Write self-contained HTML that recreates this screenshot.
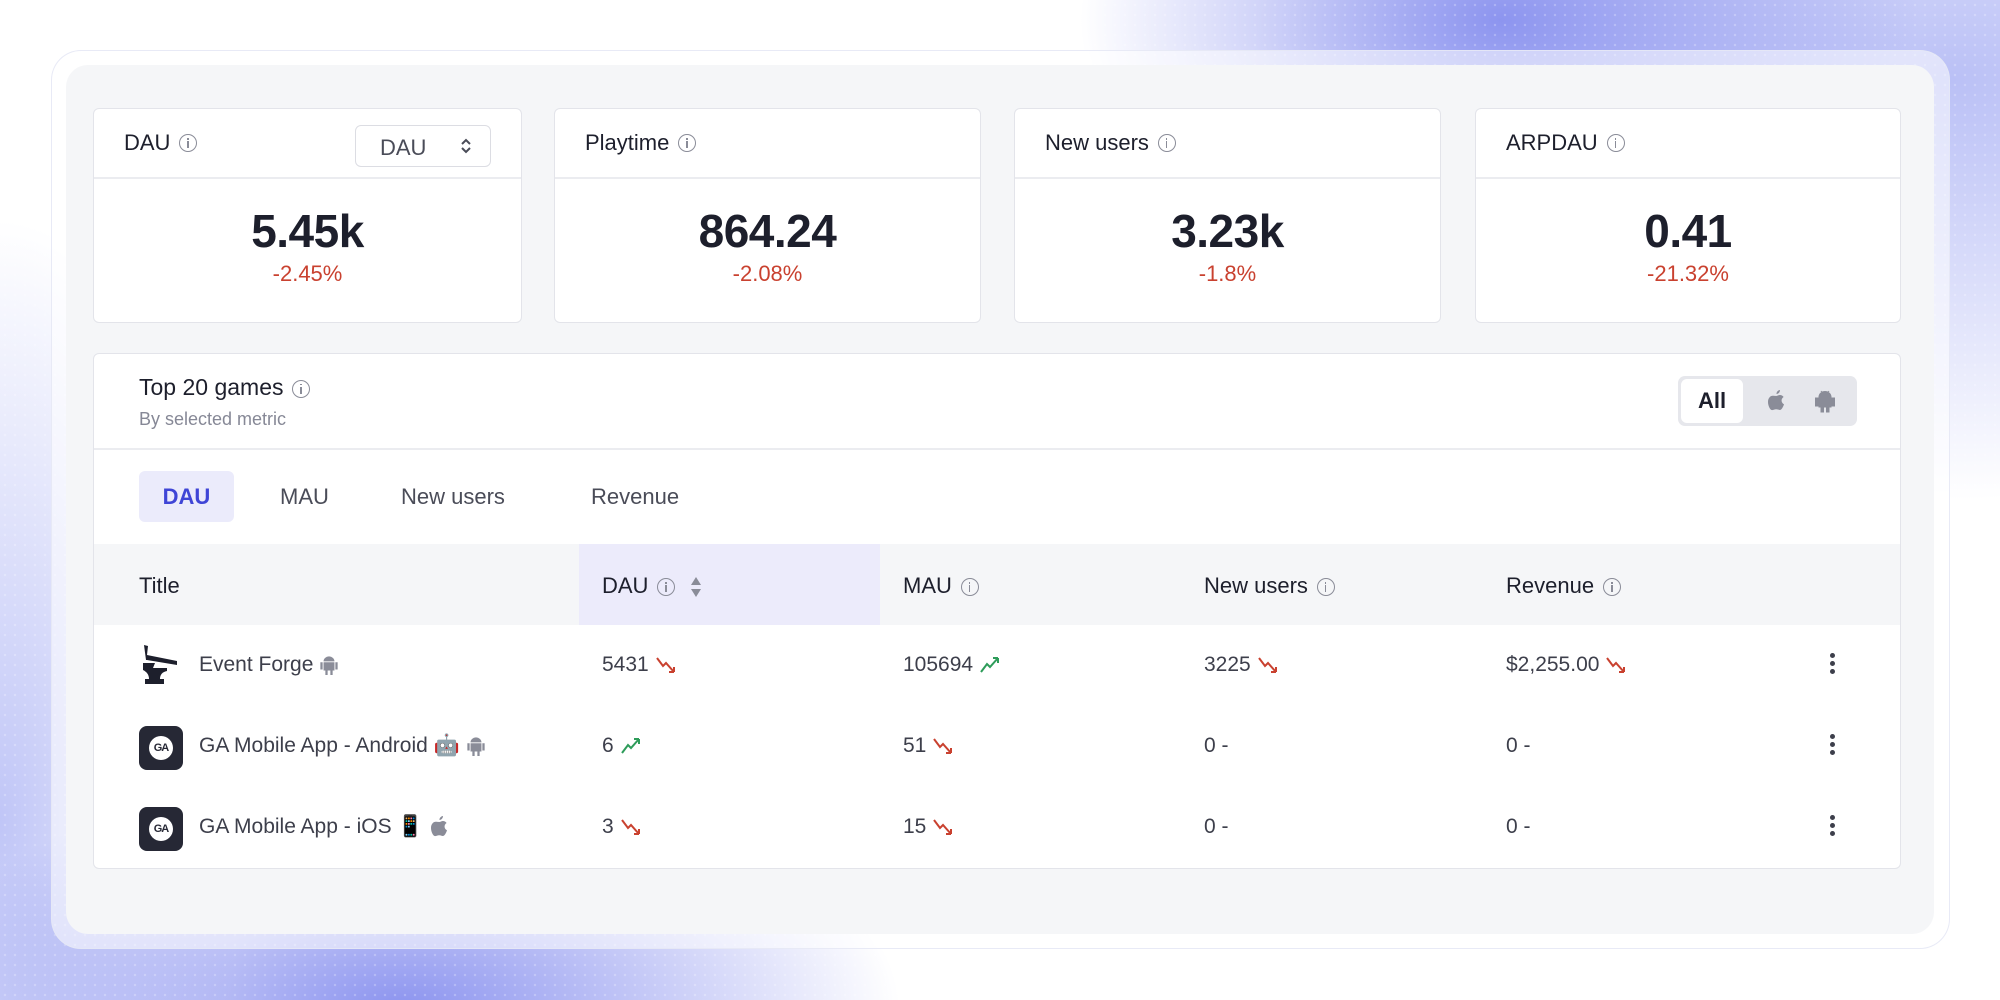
<!DOCTYPE html>
<html><head><meta charset="utf-8"><style>
*{box-sizing:border-box;margin:0;padding:0}
body{width:2000px;height:1000px;overflow:hidden;font-family:"Liberation Sans",sans-serif;color:#1d1f2c;position:relative;
background:
radial-gradient(ellipse 420px 240px at 1500px 20px,rgba(110,120,235,.75),rgba(110,120,235,0) 100%),
radial-gradient(ellipse 700px 420px at 1950px 80px,rgba(140,150,240,.6),rgba(140,150,240,0) 100%),
radial-gradient(ellipse 500px 240px at 400px 1010px,rgba(110,120,235,.8),rgba(110,120,235,0) 100%),
radial-gradient(ellipse 240px 600px at 0px 820px,rgba(140,150,240,.55),rgba(140,150,240,0) 100%),
#fff}
.dots{position:absolute;inset:0;background-image:radial-gradient(rgba(255,255,255,.25) 1px,transparent 1.4px);background-size:10px 10px}
.outer{position:absolute;left:51px;top:50px;width:1899px;height:899px;border-radius:30px;background:rgba(255,255,255,.55);border:1px solid rgba(230,232,245,.9)}
.panel{position:absolute;left:66px;top:65px;width:1868px;height:869px;border-radius:22px;background:#f5f6f8}
.card{position:absolute;top:108px;height:215px;background:#fff;border:1px solid #e3e4ea;border-radius:6px}
.card .hd{height:70px;border-bottom:2px solid #ebecf0;display:flex;align-items:center;padding-left:30px;font-size:22px}
.info{display:inline-block;width:18px;height:18px;border:1.5px solid #8a8c98;border-radius:50%;margin-left:9px;position:relative;vertical-align:middle}
.info:after{content:"";position:absolute;left:7px;top:6px;width:1.5px;height:7px;background:#8a8c98}
.info:before{content:"";position:absolute;left:7px;top:3px;width:1.5px;height:1.5px;background:#8a8c98}
.big{text-align:center;font-size:46px;font-weight:600;margin-top:25px;line-height:54px;letter-spacing:-.5px}
.pct{text-align:center;font-size:22px;color:#c9412f;margin-top:3px}
.sel{position:absolute;left:261px;top:16px;width:136px;height:42px;border:1px solid #dcdde3;border-radius:6px;font-size:22px;color:#4a4c58;padding:9px 0 0 24px}
.tbl{position:absolute;left:93px;top:353px;width:1808px;height:516px;background:#fff;border:1px solid #e3e4ea;border-radius:6px;overflow:hidden}
.abs{position:absolute}
.row{position:absolute;left:0;width:1808px;font-size:21px;color:#3d3f4b}
.dn,.up{display:inline-block;vertical-align:middle;margin-left:6px}
.kb{position:absolute;left:1736px;width:5px}
.kb i{display:block;width:5px;height:5px;border-radius:50%;background:#3d3f4b;margin-bottom:3px}
.ic{position:absolute;left:45px;width:44px;height:44px;border-radius:8px;background:#262835}
.ic b{position:absolute;left:10px;top:10px;width:24px;height:24px;border-radius:50%;background:#fff;color:#262835;font-size:11px;font-weight:700;text-align:center;line-height:24px;letter-spacing:-1px}
</style></head><body><div class="dots"></div>
<div class="outer"></div>
<div class="panel"></div>

<div class="card" style="left:93px;width:429px"><div class="hd">DAU<span class="info"></span></div>
<div class="sel">DAU<svg style="position:absolute;right:18px;top:11px" width="12" height="18" viewBox="0 0 12 18"><path d="M2 7l4-4 4 4M2 11l4 4 4-4" fill="none" stroke="#4a4c58" stroke-width="2"/></svg></div>
<div class="big">5.45k</div><div class="pct">-2.45%</div></div>
<div class="card" style="left:554px;width:427px"><div class="hd">Playtime<span class="info"></span></div><div class="big">864.24</div><div class="pct">-2.08%</div></div>
<div class="card" style="left:1014px;width:427px"><div class="hd">New users<span class="info"></span></div><div class="big">3.23k</div><div class="pct">-1.8%</div></div>
<div class="card" style="left:1475px;width:426px"><div class="hd">ARPDAU<span class="info"></span></div><div class="big">0.41</div><div class="pct">-21.32%</div></div>

<div class="tbl">
<div class="abs" style="left:45px;top:20px;font-size:23px">Top 20 games<span class="info"></span></div>
<div class="abs" style="left:45px;top:55px;font-size:18px;color:#868896">By selected metric</div>
<div class="abs" style="left:1584px;top:22px;width:179px;height:50px;border-radius:7px;background:#e6e7ec">
 <div class="abs" style="left:3px;top:3px;width:62px;height:44px;background:#fff;border-radius:6px;font-size:22px;font-weight:600;text-align:center;line-height:44px">All</div>
 <svg class="abs" style="left:88px;top:13px" width="20" height="24" viewBox="0 0 20 24"><path d="M14 1c0 2-1.5 4-3.5 4C10.3 3 12 1.2 14 1zM10 7c1.5 0 2.5-1 4-1 1.2 0 2.8.7 3.6 2-3 1.8-2.5 6 .4 7.2-.8 2.5-2.4 5.8-4.2 5.8-1.3 0-1.8-.8-3.6-.8s-2.4.8-3.6.8C4.5 22 2 17 2 13 2 9 4.5 6.8 6.6 6.8 8 6.8 9 7 10 7z" fill="#8a8c98"/></svg>
 <svg class="abs" style="left:136px;top:13px" width="22" height="24" viewBox="0 0 22 24"><path d="M5 8a6 5.5 0 0 1 12 0zM5 9h12v9H5zM1.5 9h2.5v8H1.5zM18 9h2.5v8H18zM7 18h2.5v5H7zM12.5 18H15v5h-2.5zM7 2l2 3M15 2l-2 3" fill="#8a8c98" stroke="#8a8c98" stroke-width="1"/></svg>
</div>
<div class="abs" style="left:0;top:94px;width:1808px;height:2px;background:#ebecf0"></div>
<div class="abs" style="left:45px;top:117px;width:95px;height:51px;border-radius:6px;background:#ebebfb;color:#3f45d6;font-size:22px;font-weight:600;text-align:center;line-height:51px">DAU</div>
<div class="abs" style="left:186px;top:130px;font-size:22px;color:#4a4c58">MAU</div>
<div class="abs" style="left:307px;top:130px;font-size:22px;color:#4a4c58">New users</div>
<div class="abs" style="left:497px;top:130px;font-size:22px;color:#4a4c58">Revenue</div>

<div class="abs" style="left:0;top:190px;width:1808px;height:81px;background:#f5f6f8"></div>
<div class="abs" style="left:485px;top:190px;width:301px;height:81px;background:#ecebfb"></div>
<div class="row" style="top:219px;color:#1d1f2c;font-size:22px">
 <span class="abs" style="left:45px">Title</span>
 <span class="abs" style="left:508px">DAU<span class="info"></span><svg style="margin-left:14px;vertical-align:middle" width="14" height="24" viewBox="0 0 14 24"><path d="M7 2l5 8H2zM7 22l5-8H2z" fill="#8a8c98"/></svg></span>
 <span class="abs" style="left:809px">MAU<span class="info"></span></span>
 <span class="abs" style="left:1110px">New users<span class="info"></span></span>
 <span class="abs" style="left:1412px">Revenue<span class="info"></span></span>
</div>

<svg class="abs" style="left:45px;top:289px" width="44" height="44" viewBox="0 0 44 44"><path d="M5 2l4 1-1 9 30 6v4L8 17l-1 0zM4 20h12l-2 5h14v3c-5 1-7 4-7 8h4v5H6v-5h4c0-4-2-7-6-9z" fill="#1d1f2c"/></svg>
<div class="row" style="top:299px">
 <span class="abs" style="left:105px">Event Forge <svg style="vertical-align:middle" width="20" height="22" viewBox="0 0 22 24"><path d="M5 8a6 5.5 0 0 1 12 0zM5 9h12v9H5zM1.5 9h2.5v8H1.5zM18 9h2.5v8H18zM7 18h2.5v5H7zM12.5 18H15v5h-2.5z" fill="#8a8c98"/></svg></span>
 <span class="abs" style="left:508px">5431<svg class="dn" width="22" height="18" viewBox="0 0 22 18"><path d="M2 2l6 8 3-3 8 9m0 0h-5m5 0v-5" fill="none" stroke="#c9412f" stroke-width="2"/></svg></span>
 <span class="abs" style="left:809px">105694<svg class="up" width="22" height="18" viewBox="0 0 22 18"><path d="M2 16l6-8 3 3 8-9m0 0h-5m5 0v5" fill="none" stroke="#2e9c5a" stroke-width="2"/></svg></span>
 <span class="abs" style="left:1110px">3225<svg class="dn" width="22" height="18" viewBox="0 0 22 18"><path d="M2 2l6 8 3-3 8 9m0 0h-5m5 0v-5" fill="none" stroke="#c9412f" stroke-width="2"/></svg></span>
 <span class="abs" style="left:1412px">$2,255.00<svg class="dn" width="22" height="18" viewBox="0 0 22 18"><path d="M2 2l6 8 3-3 8 9m0 0h-5m5 0v-5" fill="none" stroke="#c9412f" stroke-width="2"/></svg></span>
 <span class="kb" style="top:0"><i></i><i></i><i></i></span>
</div>

<div class="ic" style="top:372px"><b>GA</b></div>
<div class="row" style="top:380px">
 <span class="abs" style="left:105px">GA Mobile App - Android 🤖 <svg style="vertical-align:middle" width="20" height="22" viewBox="0 0 22 24"><path d="M5 8a6 5.5 0 0 1 12 0zM5 9h12v9H5zM1.5 9h2.5v8H1.5zM18 9h2.5v8H18zM7 18h2.5v5H7zM12.5 18H15v5h-2.5z" fill="#8a8c98"/></svg></span>
 <span class="abs" style="left:508px">6<svg class="up" width="22" height="18" viewBox="0 0 22 18"><path d="M2 16l6-8 3 3 8-9m0 0h-5m5 0v5" fill="none" stroke="#2e9c5a" stroke-width="2"/></svg></span>
 <span class="abs" style="left:809px">51<svg class="dn" width="22" height="18" viewBox="0 0 22 18"><path d="M2 2l6 8 3-3 8 9m0 0h-5m5 0v-5" fill="none" stroke="#c9412f" stroke-width="2"/></svg></span>
 <span class="abs" style="left:1110px">0 -</span>
 <span class="abs" style="left:1412px">0 -</span>
 <span class="kb" style="top:0"><i></i><i></i><i></i></span>
</div>

<div class="ic" style="top:453px"><b>GA</b></div>
<div class="row" style="top:461px">
 <span class="abs" style="left:105px">GA Mobile App - iOS 📱 <svg style="vertical-align:middle" width="20" height="24" viewBox="0 0 20 24"><path d="M14 1c0 2-1.5 4-3.5 4C10.3 3 12 1.2 14 1zM10 7c1.5 0 2.5-1 4-1 1.2 0 2.8.7 3.6 2-3 1.8-2.5 6 .4 7.2-.8 2.5-2.4 5.8-4.2 5.8-1.3 0-1.8-.8-3.6-.8s-2.4.8-3.6.8C4.5 22 2 17 2 13 2 9 4.5 6.8 6.6 6.8 8 6.8 9 7 10 7z" fill="#8a8c98"/></svg></span>
 <span class="abs" style="left:508px">3<svg class="dn" width="22" height="18" viewBox="0 0 22 18"><path d="M2 2l6 8 3-3 8 9m0 0h-5m5 0v-5" fill="none" stroke="#c9412f" stroke-width="2"/></svg></span>
 <span class="abs" style="left:809px">15<svg class="dn" width="22" height="18" viewBox="0 0 22 18"><path d="M2 2l6 8 3-3 8 9m0 0h-5m5 0v-5" fill="none" stroke="#c9412f" stroke-width="2"/></svg></span>
 <span class="abs" style="left:1110px">0 -</span>
 <span class="abs" style="left:1412px">0 -</span>
 <span class="kb" style="top:0"><i></i><i></i><i></i></span>
</div>
</div>
</body></html>
